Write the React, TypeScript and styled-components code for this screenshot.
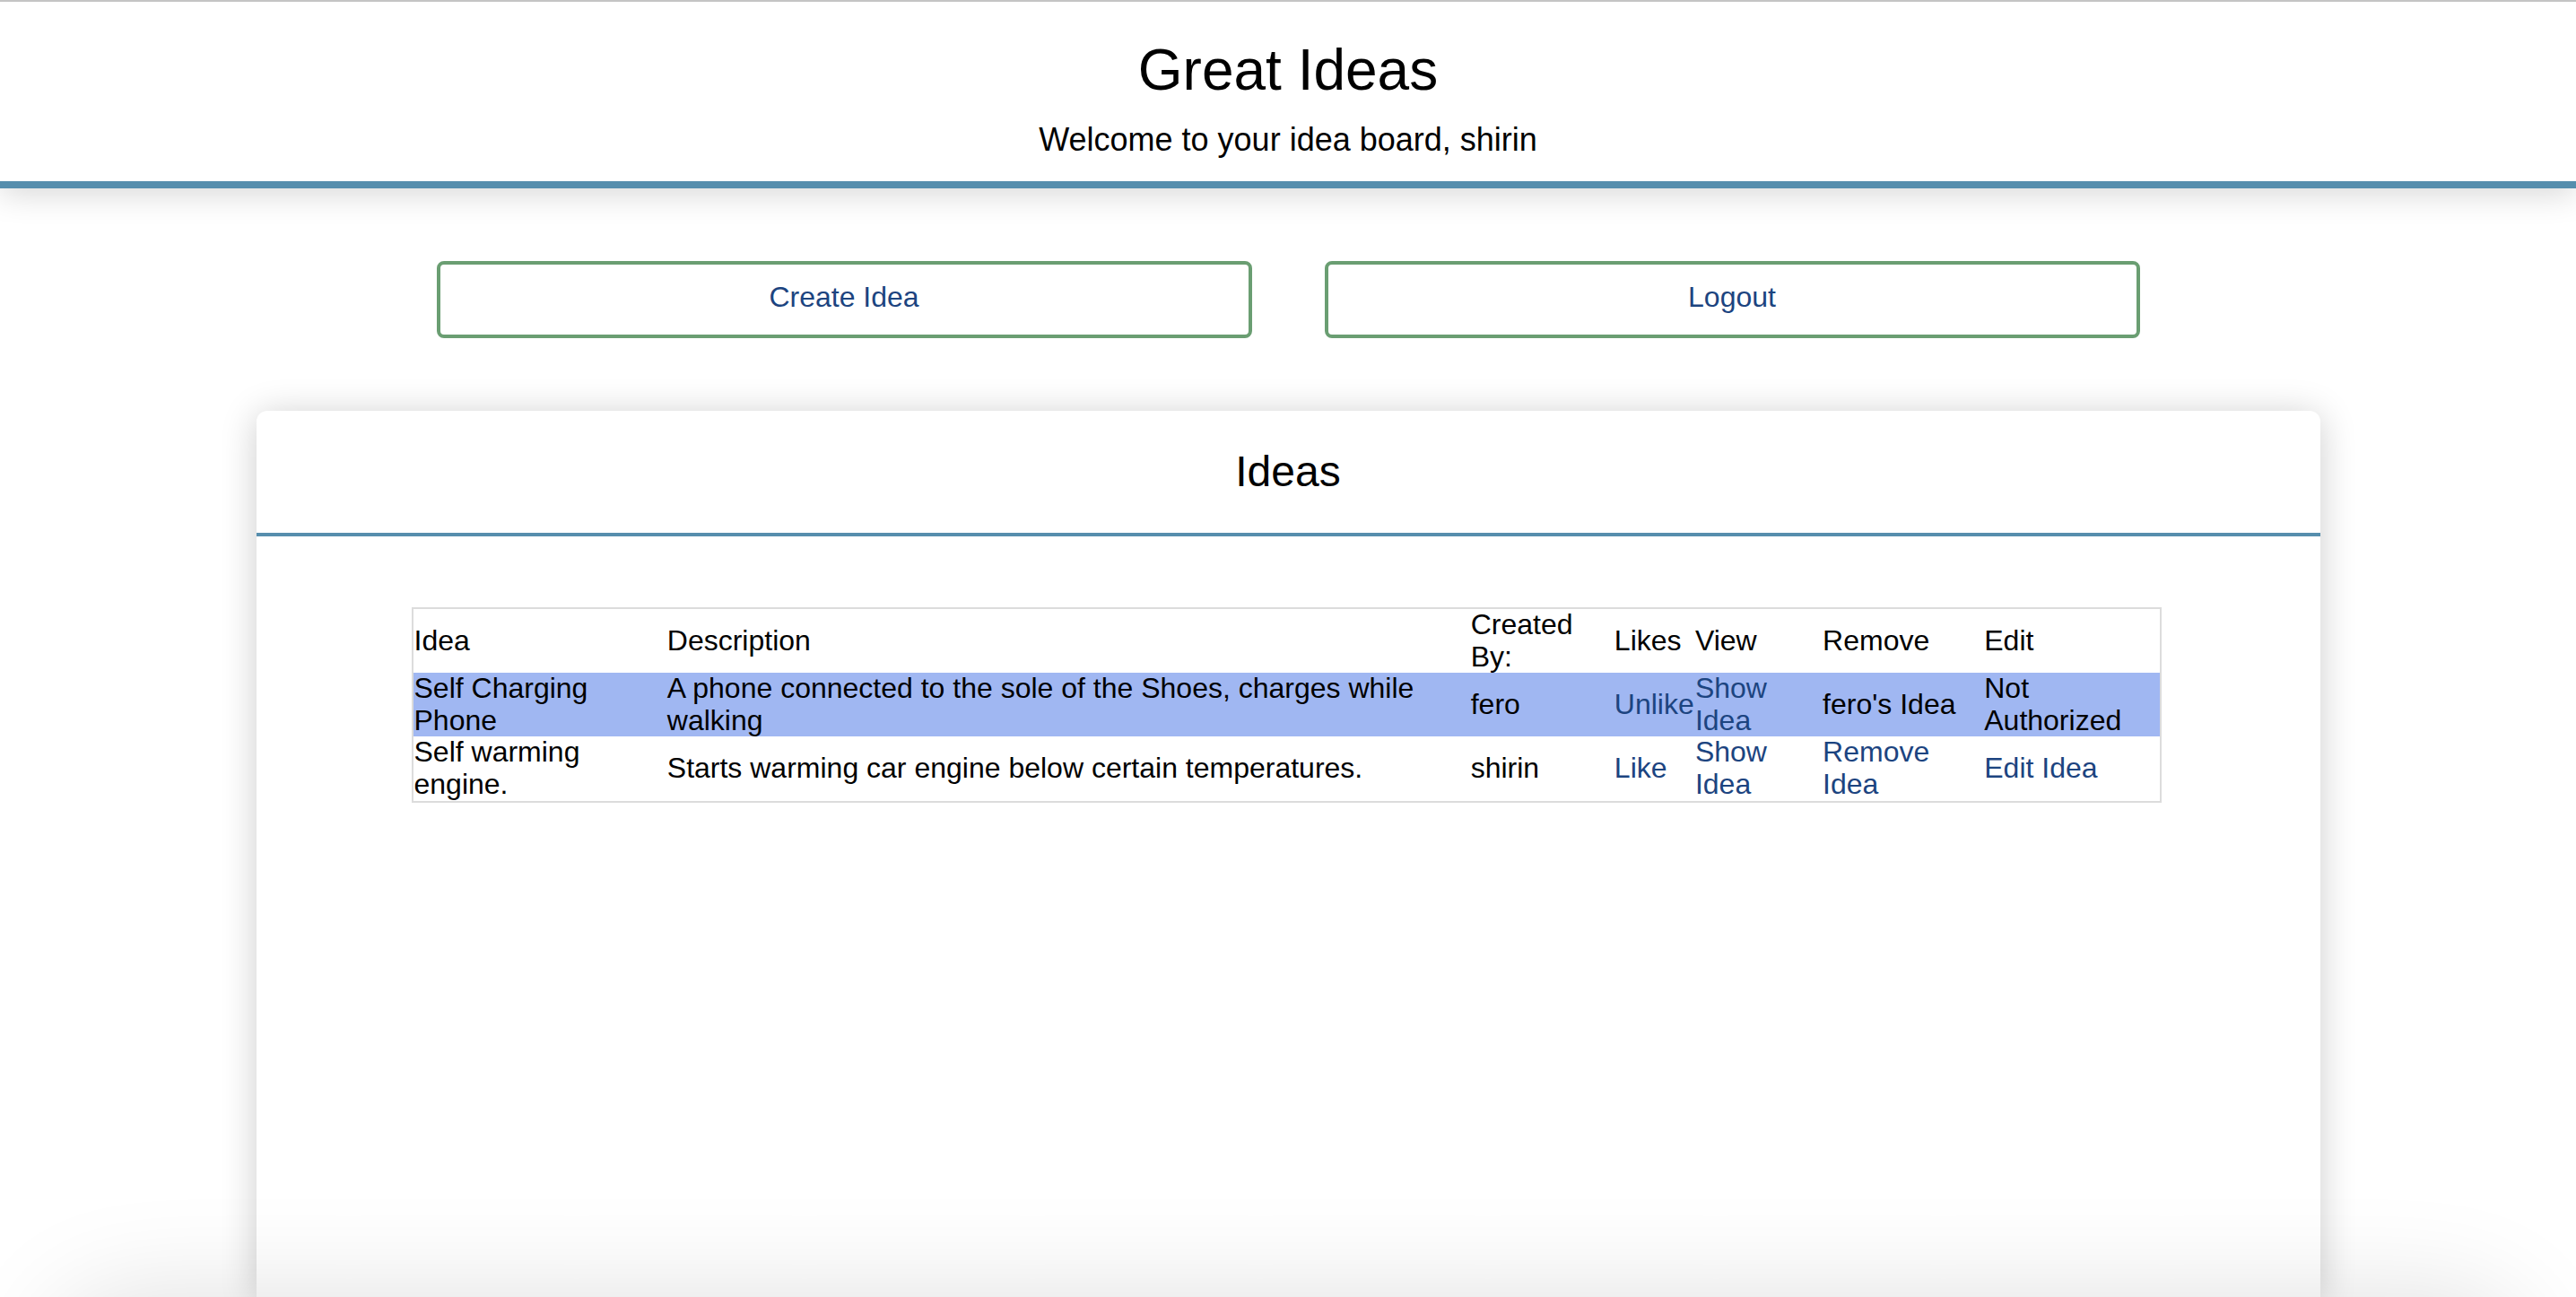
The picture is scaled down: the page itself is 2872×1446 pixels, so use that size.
import React from 'react';
import styled, { createGlobalStyle } from 'styled-components';

const GlobalStyle = createGlobalStyle`
  html, body {
    margin: 0;
    padding: 0;
    background: #fff;
  }
  body {
    font-family: "Liberation Sans", Arial, Helvetica, sans-serif;
    color: #000;
  }
`;

const Page = styled.div`
  display: flex;
  flex-direction: column;
  height: 100vh;
  overflow: hidden;
`;

const Header = styled.header`
  position: relative;
  z-index: 1;
  flex: none;
  text-align: center;
  background: #fff;
  border-top: 2px solid #c4c4c4;
  border-bottom: 8px solid #568ead;
  padding: 39px 0 25px;
  box-shadow: 0 6px 34px rgba(0, 0, 0, 0.16);
`;

const Title = styled.h1`
  margin: 0 0 20px;
  font-size: 64px;
  font-weight: normal;
  line-height: 74px;
`;

const Welcome = styled.p`
  margin: 0;
  font-size: 36px;
  line-height: 42px;
`;

const ButtonRow = styled.div`
  flex: none;
  display: flex;
  justify-content: center;
  gap: 81px;
  margin-top: 81px;
`;

const ActionButton = styled.button`
  box-sizing: border-box;
  width: 909px;
  height: 86px;
  padding: 0 0 6px;
  background: #fff;
  border: 4px solid #6a9e72;
  border-radius: 8px;
  color: #1c4480;
  font-family: inherit;
  font-size: 32px;
  cursor: pointer;
`;

const Card = styled.section`
  flex: 1;
  box-sizing: border-box;
  width: 2301px;
  margin: 81px auto 0;
  background: #fff;
  border-radius: 12px 12px 0 0;
  box-shadow: 0 4px 40px rgba(0, 0, 0, 0.2);
`;

const CardTitle = styled.h2`
  margin: 0;
  padding: 40px 0 41px;
  font-size: 48px;
  font-weight: normal;
  line-height: 55px;
  text-align: center;
  border-bottom: 4px solid #568ead;
`;

const Table = styled.table`
  width: 1951px;
  margin: 79px 0 0 173px;
  table-layout: fixed;
  border-collapse: collapse;
  border: 2px solid #dcdcdc;
  font-size: 32px;
  line-height: 35.6px;
`;

const Row = styled.tr<{ $liked?: boolean }>`
  background: ${(p) => (p.$liked ? '#a0b7f2' : 'transparent')};
`;

const HeadCell = styled.th`
  padding: 0 1px;
  font-weight: normal;
  text-align: left;
  vertical-align: middle;
`;

const Cell = styled.td`
  padding: 0 1px;
  vertical-align: middle;
`;

const Link = styled.a`
  color: #1c4480;
  text-decoration: none;
  cursor: pointer;
`;

const BottomShade = styled.div`
  position: fixed;
  left: 60px;
  right: 60px;
  top: 100%;
  height: 300px;
  border-radius: 80px;
  box-shadow: 0 0 120px rgba(0, 0, 0, 0.13);
  pointer-events: none;
`;

const widths = [283, 895, 160, 90, 142, 180, 197];

const ideas = [
  {
    title: 'Self Charging Phone',
    description: 'A phone connected to the sole of the Shoes, charges while walking',
    author: 'fero',
    liked: true,
    mine: false,
  },
  {
    title: 'Self warming engine.',
    description: 'Starts warming car engine below certain temperatures.',
    author: 'shirin',
    liked: false,
    mine: true,
  },
];

const App: React.FC = () => {
  const user = 'shirin';

  return (
    <Page>
      <GlobalStyle />
      <Header>
        <Title>Great Ideas</Title>
        <Welcome>Welcome to your idea board, {user}</Welcome>
      </Header>

      <ButtonRow>
        <ActionButton>Create Idea</ActionButton>
        <ActionButton>Logout</ActionButton>
      </ButtonRow>

      <Card>
        <CardTitle>Ideas</CardTitle>
        <Table>
          <colgroup>
            {widths.map((w, i) => (
              <col key={i} style={{ width: w }} />
            ))}
          </colgroup>
          <thead>
            <Row>
              <HeadCell>Idea</HeadCell>
              <HeadCell>Description</HeadCell>
              <HeadCell>Created By:</HeadCell>
              <HeadCell>Likes</HeadCell>
              <HeadCell>View</HeadCell>
              <HeadCell>Remove</HeadCell>
              <HeadCell>Edit</HeadCell>
            </Row>
          </thead>
          <tbody>
            {ideas.map((idea) => (
              <Row key={idea.title} $liked={idea.liked}>
                <Cell>{idea.title}</Cell>
                <Cell>{idea.description}</Cell>
                <Cell>{idea.author}</Cell>
                <Cell>
                  <Link>{idea.liked ? 'Unlike' : 'Like'}</Link>
                </Cell>
                <Cell>
                  <Link>Show Idea</Link>
                </Cell>
                <Cell>{idea.mine ? <Link>Remove Idea</Link> : `${idea.author}'s Idea`}</Cell>
                <Cell>{idea.mine ? <Link>Edit Idea</Link> : 'Not Authorized'}</Cell>
              </Row>
            ))}
          </tbody>
        </Table>
      </Card>
      <BottomShade />
    </Page>
  );
};

export default App;
